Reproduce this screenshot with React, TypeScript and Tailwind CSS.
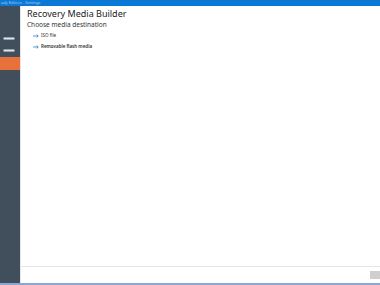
import React from 'react';

const options = [
  { label: 'ISO file', bold: false },
  { label: 'Removable flash media', bold: true },
];

function Arrow() {
  return (
    <svg width="6" height="4" viewBox="0 0 6 4" className="shrink-0">
      <path d="M0 2h5.2M3.6 0.5L5.2 2L3.6 3.5" stroke="#2b7fd4" strokeWidth="0.8" fill="none" />
    </svg>
  );
}

export default function App() {
  return (
    <div
      className="w-[380px] h-[285px] flex flex-col bg-white overflow-hidden"
      style={{ fontFamily: '"Segoe UI", "Noto Sans", sans-serif' }}
    >
      <div className="h-[6px] bg-[#0a78d4] text-[4px] leading-[6px] text-white/60 pl-[1px] whitespace-nowrap">
        ady Edition - Settings
      </div>
      <div className="flex flex-1 min-h-0">
        <div className="w-[21px] bg-[#414e5b] flex flex-col border-r border-[#e4e7ea]">
          <div className="h-[31px]" />
          <div className="ml-[3px] w-[12px] h-[3px] rounded-[2px] bg-[#dfe3e7] border-[0.5px] border-[#9aa4ae]" />
          <div className="h-[9px]" />
          <div className="ml-[3px] w-[12px] h-[3px] rounded-[2px] bg-[#dfe3e7] border-[0.5px] border-[#9aa4ae]" />
          <div className="h-[5px]" />
          <div className="h-[13px] bg-[#e8703a]" />
        </div>
        <div className="flex-1 flex flex-col">
          <div className="flex-1 pl-[6px] pt-[2px]">
            <div className="text-[9px] leading-[12px] text-[#222]">Recovery Media Builder</div>
            <div className="text-[6.5px] leading-[8px] text-[#333] mt-[1px]">Choose media destination</div>
            <div className="flex flex-col gap-[4px] mt-[3px] pl-[6px]">
              {options.map((o) => (
                <div key={o.label} className="flex items-center gap-[2px] h-[7px]">
                  <Arrow />
                  <span className={`text-[4.5px] leading-[7px] text-[#333] ${o.bold ? 'font-semibold' : ''}`}>
                    {o.label}
                  </span>
                </div>
              ))}
            </div>
          </div>
          <div className="h-[17px] border-t border-[#e6e6e6] flex items-center justify-end">
            <div className="w-[10px] h-[8px] bg-[#cfcfcf]" />
          </div>
        </div>
      </div>
      <div className="h-[2px] bg-[#8aa6d4]" />
    </div>
  );
}
